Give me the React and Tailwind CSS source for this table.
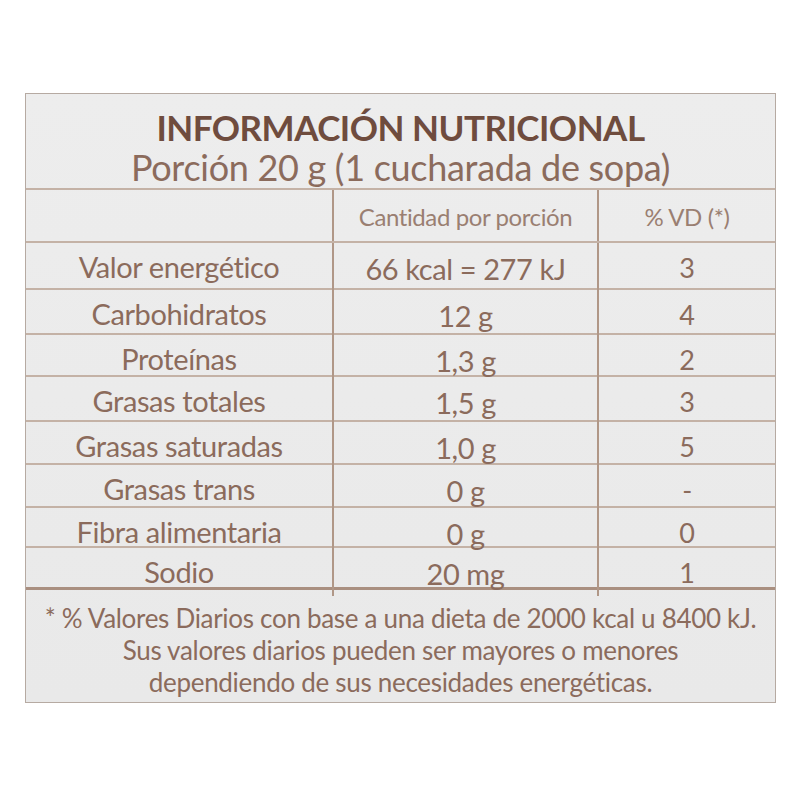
import React from "react";

const filas = [
  { nombre: "Valor energético", cantidad: "66 kcal = 277 kJ", vd: "3", h: "h-[47px]" },
  { nombre: "Carbohidratos", cantidad: "12 g", vd: "4", h: "h-[45px]" },
  { nombre: "Proteínas", cantidad: "1,3 g", vd: "2", h: "h-[42px]" },
  { nombre: "Grasas totales", cantidad: "1,5 g", vd: "3", h: "h-[45px]" },
  { nombre: "Grasas saturadas", cantidad: "1,0 g", vd: "5", h: "h-[43px]" },
  { nombre: "Grasas trans", cantidad: "0 g", vd: "-", h: "h-[43px]" },
  { nombre: "Fibra alimentaria", cantidad: "0 g", vd: "0", h: "h-[40px]" },
  { nombre: "Sodio", cantidad: "20 mg", vd: "1", h: "h-[42px]" },
];

function App() {
  return (
    <div
      className="w-[800px] h-[800px] bg-white pt-[93px] pl-[25px] text-[#8b6b5c]"
      style={{ fontFamily: "Lato, 'Open Sans', sans-serif" }}
    >
      <div className="w-[751px] h-[610px] bg-gradient-to-b from-[#ededed] to-[#e9e9e9] border border-[#b6aaa2] flex flex-col">
        <div className="h-[96px] flex flex-col items-center pt-[13px] border-b-2 border-[#c4b2a6]">
          <h1 className="text-[35px] leading-[40px] font-bold text-[#6f4c3e] tracking-[-0.5px]">
            INFORMACIÓN NUTRICIONAL
          </h1>
          <p className="text-[36px] leading-[40px] tracking-[-0.3px]">
            Porción 20 g (1 cucharada de sopa)
          </p>
        </div>

        <div className="grid grid-cols-[308px_265px_1fr] h-[53px] border-b-2 border-[#c4b2a6] text-[24px] text-[#9a7f72] tracking-[-0.4px]">
          <div className="border-r-2 border-[#b09787]" />
          <div className="border-r-2 border-[#b09787] flex items-center justify-center pt-[2px]">
            Cantidad por porción
          </div>
          <div className="flex items-center justify-center pt-[2px]">% VD (*)</div>
        </div>

        {filas.map((fila, i) => (
          <div
            key={i}
            className={`grid grid-cols-[308px_265px_1fr] ${fila.h} ${
              i === filas.length - 1 ? "border-b-[3px] border-[#a98f80]" : "border-b-2 border-[#c4b2a6]"
            } text-[29px] tracking-[-0.4px]`}
          >
            <div className="border-r-2 border-[#b09787] flex items-center justify-center">
              {fila.nombre}
            </div>
            <div className="border-r-2 border-[#b09787] flex items-center justify-center pt-[4px]">
              {fila.cantidad}
            </div>
            <div className="flex items-center justify-center text-[27px] pt-[2px]">
              {fila.vd}
            </div>
          </div>
        ))}

        <div className="flex-1 flex flex-col items-center pt-[12px] text-[26px] leading-[32px] tracking-[-0.3px] text-center">
          <p>* % Valores Diarios con base a una dieta de 2000 kcal u 8400 kJ.</p>
          <p>Sus valores diarios pueden ser mayores o menores</p>
          <p>dependiendo de sus necesidades energéticas.</p>
        </div>
      </div>
    </div>
  );
}

export default App;
